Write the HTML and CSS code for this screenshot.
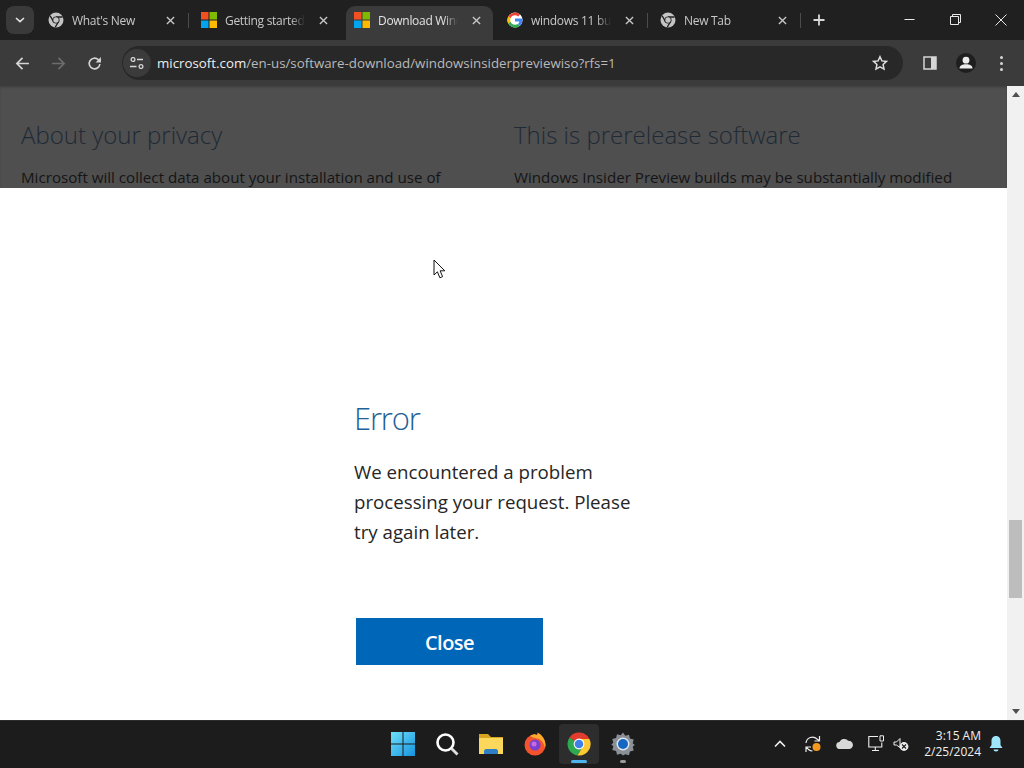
FILE: index.html
```html
<!DOCTYPE html>
<html lang="en">
<head>
  <meta charset="UTF-8" />
  <title>Download Windows Insider Preview</title>
  <link rel="stylesheet" href="styles.css">
</head>
<body>
  <svg class="defs" width="0" height="0">
    <symbol id="chrome-grey" viewBox="0 0 16 16">
      <circle cx="8" cy="8" r="7.5" fill="#c4c4c4"/>
      <path d="M8 5h6.600M5.400 9.500 2.200 3.900M10.600 9.500 7.300 15.200" stroke="#202020" stroke-width="1.300" fill="none"/>
      <circle cx="8" cy="8" r="3.600" fill="#202020"/>
      <circle cx="8" cy="8" r="2.700" fill="#c4c4c4"/>
    </symbol>
    <symbol id="ms-logo" viewBox="0 0 16 16">
      <rect width="7.500" height="7.500" fill="#f25022"/>
      <rect x="8.500" width="7.500" height="7.500" fill="#7fba00"/>
      <rect y="8.500" width="7.500" height="7.500" fill="#00a4ef"/>
      <rect x="8.500" y="8.500" width="7.500" height="7.500" fill="#ffb900"/>
    </symbol>
    <symbol id="x-mark" viewBox="0 0 10 10">
      <path d="M1 1l8 8M9 1l-8 8" stroke="#c7c7c7" stroke-width="1.500" fill="none"/>
    </symbol>
  </svg>

  <div class="tabstrip">
    <div class="tab-search">
      <svg width="10" height="6" viewBox="0 0 10 6"><path d="M1 1l4 3.600L9 1" stroke="#e3e3e3" stroke-width="1.600" fill="none"/></svg>
    </div>
    <div class="tab sep">
      <svg class="favicon"><use href="#chrome-grey"/></svg>
      <span class="tab-title">What's New</span>
      <svg class="tab-close"><use href="#x-mark"/></svg>
    </div>
    <div class="tab">
      <svg class="favicon"><use href="#ms-logo"/></svg>
      <span class="tab-title">Getting started</span>
      <svg class="tab-close"><use href="#x-mark"/></svg>
    </div>
    <div class="tab active">
      <svg class="favicon"><use href="#ms-logo"/></svg>
      <span class="tab-title">Download Windows</span>
      <svg class="tab-close"><use href="#x-mark"/></svg>
    </div>
    <div class="tab sep">
      <svg class="favicon" viewBox="0 0 16 16">
        <circle cx="8" cy="8" r="7.600" fill="#fff"/>
        <path d="M8 3.200a4.800 4.800 0 0 1 3.200 1.200l1.900-1.900A7.600 7.600 0 0 0 1.300 4.500l2.200 1.700A4.800 4.800 0 0 1 8 3.200z" fill="#ea4335"/>
        <path d="M3.200 8c0-.6.1-1.200.3-1.800L1.300 4.500a7.600 7.600 0 0 0 0 7l2.200-1.700A4.800 4.800 0 0 1 3.200 8z" fill="#fbbc05"/>
        <path d="M8 12.800a4.800 4.800 0 0 1-4.500-3L1.300 11.500A7.600 7.600 0 0 0 13 13.800l-2.100-1.700a4.800 4.800 0 0 1-2.900.7z" fill="#34a853"/>
        <path d="M15.500 6.600H8v3h4.300a3.700 3.700 0 0 1-1.400 2.500l2.100 1.700c1.600-1.500 2.600-3.700 2.500-7.200z" fill="#4285f4"/>
      </svg>
      <span class="tab-title">windows 11 build</span>
      <svg class="tab-close"><use href="#x-mark"/></svg>
    </div>
    <div class="tab sep">
      <svg class="favicon"><use href="#chrome-grey"/></svg>
      <span class="tab-title">New Tab</span>
      <svg class="tab-close"><use href="#x-mark"/></svg>
    </div>
    <svg class="new-tab" width="12" height="12" viewBox="0 0 12 12"><path d="M6 .5v11M.5 6h11" stroke="#d8d8d8" stroke-width="1.800"/></svg>
    <div class="window-controls">
      <span class="win-btn"><svg width="11" height="11" viewBox="0 0 11 11"><path d="M.5 5.500h10" stroke="#e8e8e8" stroke-width="1"/></svg></span>
      <span class="win-btn"><svg width="11" height="11" viewBox="0 0 11 11"><path d="M.5 2.500h8v8h-8zM2.500 2.500V.5h8v8H8.500" stroke="#e8e8e8" stroke-width="1" fill="none"/></svg></span>
      <span class="win-btn"><svg width="12" height="12" viewBox="0 0 12 12"><path d="M.5.5l11 11M11.500.5l-11 11" stroke="#e8e8e8" stroke-width="1" fill="none"/></svg></span>
    </div>
  </div>

  <div class="toolbar">
    <svg class="nav-icon" viewBox="0 0 14 14"><path d="M13 7H2M7 1.800 1.800 7 7 12.200" stroke="#d6d6d6" stroke-width="1.600" fill="none"/></svg>
    <svg class="nav-icon" viewBox="0 0 14 14"><path d="M1 7h11M7 1.800 12.200 7 7 12.200" stroke="#6c6c6c" stroke-width="1.600" fill="none"/></svg>
    <svg class="nav-icon" viewBox="0 0 14 14"><path d="M12 7.500A5 5 0 1 1 10.500 3.400L12.300 5" stroke="#d6d6d6" stroke-width="1.500" fill="none"/><path d="M13 1v5H8z" fill="#d6d6d6"/></svg>
    <div class="omnibox">
      <span class="site-info">
        <svg width="14" height="12" viewBox="0 0 14 12"><path d="M7 2.500h6M0 9.500h6.500" stroke="#d6d6d6" stroke-width="1.500"/><circle cx="3" cy="2.500" r="1.900" stroke="#d6d6d6" stroke-width="1.300" fill="none"/><circle cx="11" cy="9.500" r="1.900" stroke="#d6d6d6" stroke-width="1.300" fill="none"/></svg>
      </span>
      <span class="url"><b>microsoft.com</b>/en-us/software-download/windowsinsiderpreviewiso?rfs=1</span>
      <svg class="star" width="16" height="16" viewBox="0 0 16 16"><path d="M8 1.700l1.900 4.200 4.600.5-3.400 3.100.9 4.600L8 11.800l-4 2.300.9-4.600L1.500 6.400l4.600-.5z" stroke="#dedede" stroke-width="1.500" fill="none"/></svg>
    </div>
    <svg class="side-panel" width="14" height="14" viewBox="0 0 14 14"><path d="M1 1h12v12H1z" stroke="#d6d6d6" stroke-width="1.500" fill="none"/><path d="M8 1h5v12H8z" fill="#d6d6d6"/></svg>
    <span class="avatar">
      <svg width="20" height="20" viewBox="0 0 20 20"><circle cx="10" cy="10" r="10" fill="#1e1e1e"/><circle cx="10" cy="7.200" r="3.400" fill="#ececec"/><path d="M3.500 15.500c0-3.200 3-4.300 6.500-4.300s6.500 1.100 6.500 4.300z" fill="#ececec"/></svg>
    </span>
    <span class="menu-dots"><i></i><i></i><i></i></span>
  </div>

  <div class="viewport">
    <main class="page">
      <section class="dimmed">
        <div class="dim-col">
          <h2>About your privacy</h2>
          <p>Microsoft will collect data about your installation and use of</p>
        </div>
        <div class="dim-col">
          <h2>This is prerelease software</h2>
          <p>Windows Insider Preview builds may be substantially modified</p>
        </div>
      </section>
      <section class="dialog">
        <h1>Error</h1>
        <p>We encountered a problem processing your request. Please try again later.</p>
        <button class="close-btn">Close</button>
      </section>
      <!-- mouse pointer caught in the capture -->
      <svg class="pointer" width="13" height="20" viewBox="0 0 13 20"><path d="M1 1v15l3.400-3.200 2.500 6 2.700-1.200-2.500-5.800h4.700z" fill="#fff" stroke="#111" stroke-width="1"/></svg>
    </main>
    <div class="scrollbar">
      <div class="scroll-btn"><span class="arrow-up"></span></div>
      <div class="scroll-track"><div class="scroll-thumb"></div></div>
      <div class="scroll-btn"><span class="arrow-down"></span></div>
    </div>
  </div>

  <footer class="taskbar">
    <div class="task-apps">
      <span class="task-app">
        <svg width="24" height="24" viewBox="0 0 24 24">
          <defs><linearGradient id="winblue" x1="0" y1="0" x2="1" y2="1"><stop offset="0" stop-color="#6fe0fb"/><stop offset="1" stop-color="#1592dd"/></linearGradient></defs>
          <path d="M0 0h11.500v11.500H0zM12.500 0H24v11.500H12.500zM0 12.500h11.500V24H0zM12.500 12.500H24V24H12.500z" fill="url(#winblue)"/>
        </svg>
      </span>
      <span class="task-app">
        <svg width="24" height="24" viewBox="0 0 24 24"><circle cx="10.500" cy="10.500" r="8" stroke="#fff" stroke-width="2.600" fill="none"/><path d="M16.500 16.500l6 6" stroke="#e0e0e0" stroke-width="2.800"/></svg>
      </span>
      <span class="task-app">
        <svg width="26" height="24" viewBox="0 0 26 24"><path d="M1 2h9l3 3h12v8H1z" fill="#d9a520"/><path d="M1 6h24v16H1z" fill="#fbd75b"/><path d="M6 22v-3c0-1 1-2 2-2h10c1 0 2 1 2 2v3z" fill="#2f7fc4"/></svg>
      </span>
      <span class="task-app">
        <svg width="24" height="24" viewBox="0 0 24 24"><circle cx="12" cy="13" r="10.500" fill="#f5532d"/><path d="M7 4c3-2 5-2 7-1 .5-1 .5-1.500.5-2.500 4.500 2 8 7 8 12.500 0 1-.2 2-.5 3-1-5-4-9-8-9.500C11 6 9 5 7 4z" fill="#ffa92e"/><circle cx="12" cy="13" r="5.500" fill="#7a3fd0"/><circle cx="11" cy="12" r="2.500" fill="#c86be0"/></svg>
      </span>
      <span class="task-app current">
        <svg width="24" height="24" viewBox="0 0 24 24"><path d="M12 12 2.500 5.500A11.500 11.500 0 0 1 22.400 7H12z" fill="#e33b2e"/><path d="M12 12 2.500 5.500A11.500 11.500 0 0 0 10.500 23.400L16 14z" fill="#2da94f"/><path d="M12 12l4 2-5.500 9.400A11.500 11.500 0 0 0 22.400 7H12z" fill="#fcc934"/><circle cx="12" cy="12" r="5.400" fill="#fff"/><circle cx="12" cy="12" r="4.300" fill="#3f7fe8"/></svg>
        <i class="running wide"></i>
      </span>
      <span class="task-app">
        <svg width="26" height="26" viewBox="0 0 26 26"><path d="M13 1.500l2.300 3.200 3.700-1 .9 3.900 3.800.9-1 3.700 2 1.800-2 1.800 1 3.700-3.800.9-.9 3.800-3.700-1L13 24.500l-2.300-1.800-3.700 1-.9-3.800-3.800-.9 1-3.700-2-1.800 2-1.800-1-3.700 3.800-.9.900-3.900 3.700 1z" fill="#8b8f96"/><circle cx="13" cy="13" r="6.500" fill="#dfe6ee"/><circle cx="13" cy="13" r="5" fill="#1667c4"/></svg>
        <i class="running"></i>
      </span>
    </div>
    <div class="tray">
      <svg class="tray-chevron" width="12" height="8" viewBox="0 0 12 8"><path d="M1 6.500l5-5 5 5" stroke="#f0f0f0" stroke-width="1.600" fill="none"/></svg>
      <span class="tray-sync">
        <svg width="18" height="18" viewBox="0 0 18 18"><path d="M2 8a6.500 6.500 0 0 1 11-4l2 1.500M15.500 1v5h-5M2 17v-5h5M2.500 12l2 2.500a6 6 0 0 0 4 1.500" stroke="#eee" stroke-width="1.200" fill="none"/><circle cx="12.500" cy="12" r="4" fill="#f39a1f"/></svg>
      </span>
      <svg class="tray-cloud" width="17" height="11" viewBox="0 0 17 11"><path d="M4 11a3.500 3.500 0 0 1-.500-7A5 5 0 0 1 12 2.800 4 4 0 0 1 13.500 11z" fill="#d8d8d8"/></svg>
      <svg class="tray-net" width="17" height="17" viewBox="0 0 17 17"><path d="M10 1.500H.8v10.500h13V7.500M4 15.500h7M7.300 12v3.500" stroke="#eee" stroke-width="1.100" fill="none"/><path d="M12 .8h3.500V6H12z" stroke="#eee" stroke-width="1" fill="none"/></svg>
      <svg class="tray-vol" width="16" height="14" viewBox="0 0 16 14"><path d="M1 5h2.500L7 1.500v9L3.500 8H1z" stroke="#eee" stroke-width="1" fill="none"/><circle cx="11" cy="9.500" r="4.400" fill="#ececec"/><path d="M9 7.500l4 4M13 7.500l-4 4" stroke="#1c1c1c" stroke-width="1.100"/></svg>
      <div class="clock"><span>3:15 AM</span><span>2/25/2024</span></div>
      <svg class="bell" width="14" height="16" viewBox="0 0 14 16"><path d="M7 0c3 0 4.500 2.300 4.500 5v4l2 3H.5l2-3V5C2.500 2.300 4 0 7 0z" fill="#9fe6fb"/><path d="M4.500 13.500h5a2.500 2 0 0 1-5 0z" fill="#9fe6fb"/></svg>
    </div>
  </footer>
</body>
</html>
```

FILE: styles.css
```css
* {
  box-sizing: border-box;
}
html, body {
  height: 100%;
}
body {
  margin: 0;
  display: flex;
  flex-direction: column;
  height: 768px;
  overflow: hidden;
  font-family: "Open Sans", "Noto Sans", sans-serif;
  background-color: #202020;
}
.defs {
  position: absolute;
}

/* tab strip */
.tabstrip {
  display: flex;
  align-items: flex-end;
  height: 40px;
  flex: none;
  background-color: #202020;
  padding-left: 6px;
}
.tab-search {
  display: flex;
  align-items: center;
  justify-content: center;
  width: 28px;
  height: 28px;
  margin: 0 2px 6px 0;
  border-radius: 8px;
  background-color: #3a3a3a;
}
.tab {
  position: relative;
  display: flex;
  align-items: center;
  width: 153px;
  height: 34px;
  padding-left: 12px;
  padding-bottom: 6px;
  font-size: 12px;
  letter-spacing: -0.3px;
  color: #c8c8c8;
}
.tab.sep::after {
  content: "";
  position: absolute;
  right: 0;
  top: 7px;
  height: 15px;
  width: 1px;
  background-color: #4c4c4c;
}
.tab.active {
  color: #e2e2e2;
}
.tab.active::before {
  content: "";
  position: absolute;
  z-index: 0;
  left: 4px;
  right: 2px;
  top: 0;
  bottom: 0;
  border-radius: 9px 9px 0 0;
  background-color: #3b3b3b;
}
.favicon {
  position: relative;
  width: 16px;
  height: 16px;
  flex: none;
}
.tab-title {
  position: relative;
  width: 80px;
  margin-left: 8px;
  white-space: nowrap;
  overflow: hidden;
  -webkit-mask-image: linear-gradient(to right, #000 82%, transparent);
  mask-image: linear-gradient(to right, #000 82%, transparent);
}
.tab-close {
  position: relative;
  width: 9px;
  height: 9px;
  margin-left: 14px;
  flex: none;
}
.new-tab {
  margin: 0 0 14px 12px;
}
.window-controls {
  display: flex;
  margin-left: auto;
  height: 40px;
}
.win-btn {
  display: flex;
  align-items: center;
  justify-content: center;
  width: 46px;
  padding-bottom: 1px;
}

/* toolbar */
.toolbar {
  display: flex;
  align-items: center;
  height: 46px;
  flex: none;
  padding-left: 15px;
  background-color: #3b3b3b;
}
.nav-icon {
  width: 15px;
  height: 15px;
  margin-right: 21px;
  flex: none;
}
.omnibox {
  display: flex;
  align-items: center;
  width: 781px;
  height: 34px;
  margin-left: -1px;
  border-radius: 17px;
  background-color: #282828;
}
.site-info {
  display: flex;
  align-items: center;
  justify-content: center;
  width: 28px;
  height: 28px;
  margin-left: 1px;
  border-radius: 50%;
  background-color: #3b3b3b;
}
.url {
  margin-left: 6px;
  font-size: 13.300px;
  color: #b9b9b9;
  white-space: nowrap;
}
.url b {
  font-weight: 400;
  color: #eeeeee;
}
.star {
  margin-left: auto;
  margin-right: 15px;
}
.side-panel {
  margin-left: 20px;
}
.avatar {
  display: flex;
  margin-left: 19px;
}
.menu-dots {
  display: flex;
  flex-direction: column;
  gap: 3px;
  margin-left: 24px;
}
.menu-dots i {
  width: 3px;
  height: 3px;
  border-radius: 50%;
  background-color: #d6d6d6;
}

/* page area */
.viewport {
  display: flex;
  flex: 1;
  min-height: 0;
}
.page {
  position: relative;
  flex: 1;
  display: flex;
  flex-direction: column;
  background-color: #ffffff;
}
.dimmed {
  display: flex;
  height: 102px;
  flex: none;
  overflow: hidden;
  padding: 31px 0 0 21px;
  background-color: #4f4f4f;
  box-shadow: inset 0 2px 3px -1px #3c3c3c;
}
.dim-col {
  width: 493px;
  flex: none;
}
.dim-col h2 {
  margin: 0;
  font-size: 24px;
  line-height: 36px;
  font-weight: 300;
  color: #1e2a36;
}
.dim-col p {
  margin: 12px 0 0;
  font-size: 15.150px;
  line-height: 24px;
  color: #151515;
  white-space: nowrap;
}
.dialog {
  flex: 1;
  padding: 208px 0 0 354px;
  background-color: #ffffff;
}
.dialog h1 {
  margin: 0;
  font-size: 31px;
  line-height: 44px;
  font-weight: 300;
  letter-spacing: -1.200px;
  color: #1f6199;
}
.dialog p {
  width: 290px;
  margin: 17px 0 0;
  font-size: 18.700px;
  line-height: 30px;
  color: #262626;
}
.close-btn {
  display: block;
  width: 187px;
  height: 47px;
  margin: 71px 0 0 2px;
  padding: 2px 0 0;
  border: none;
  background-color: #0067b8;
  color: #ffffff;
  font-family: inherit;
  font-size: 20px;
  font-weight: 600;
  letter-spacing: -0.5px;
}
.pointer {
  position: absolute;
  left: 433px;
  top: 173px;
}
.scrollbar {
  display: flex;
  flex-direction: column;
  width: 17px;
  flex: none;
  background-color: #f1f1f1;
}
.scroll-btn {
  display: flex;
  align-items: center;
  justify-content: center;
  height: 17px;
  background-color: #f1f1f1;
}
.arrow-up {
  border: 4px solid transparent;
  border-top: 0;
  border-bottom: 5px solid #505050;
}
.arrow-down {
  border: 4px solid transparent;
  border-bottom: 0;
  border-top: 5px solid #505050;
}
.scroll-track {
  flex: 1;
  padding: 417px 2px 0 2px;
}
.scroll-thumb {
  height: 78px;
  background-color: #bdbdbd;
}

/* windows taskbar */
.taskbar {
  position: relative;
  display: flex;
  align-items: center;
  height: 48px;
  flex: none;
  padding-bottom: 2px;
  background-color: #1c1c1c;
  border-top: 1px solid #2c2c2c;
}
.task-apps {
  display: flex;
  align-items: center;
  margin-left: 381px;
}
.task-app {
  position: relative;
  display: flex;
  align-items: center;
  justify-content: center;
  width: 40px;
  height: 40px;
  margin: 0 2px;
}
.task-app.current {
  border-radius: 4px;
  background-color: #2d2d2d;
}
.running {
  position: absolute;
  left: 50%;
  bottom: 1px;
  width: 6px;
  height: 3px;
  margin-left: -3px;
  border-radius: 2px;
  background-color: #9a9a9a;
}
.running.wide {
  width: 16px;
  margin-left: -8px;
  background-color: #4cb4ee;
}
.tray {
  display: flex;
  align-items: center;
  margin-left: auto;
  color: #f0f0f0;
}
.tray-sync {
  display: flex;
  margin-left: 18px;
}
.tray-cloud {
  margin-left: 14px;
}
.tray-net {
  margin-left: 15px;
}
.tray-vol {
  margin-left: 8px;
}
.clock {
  display: flex;
  flex-direction: column;
  align-items: flex-end;
  margin-left: 15px;
  font-size: 12px;
  line-height: 16px;
}
.bell {
  margin: 0 21px 0 8px;
}
```
